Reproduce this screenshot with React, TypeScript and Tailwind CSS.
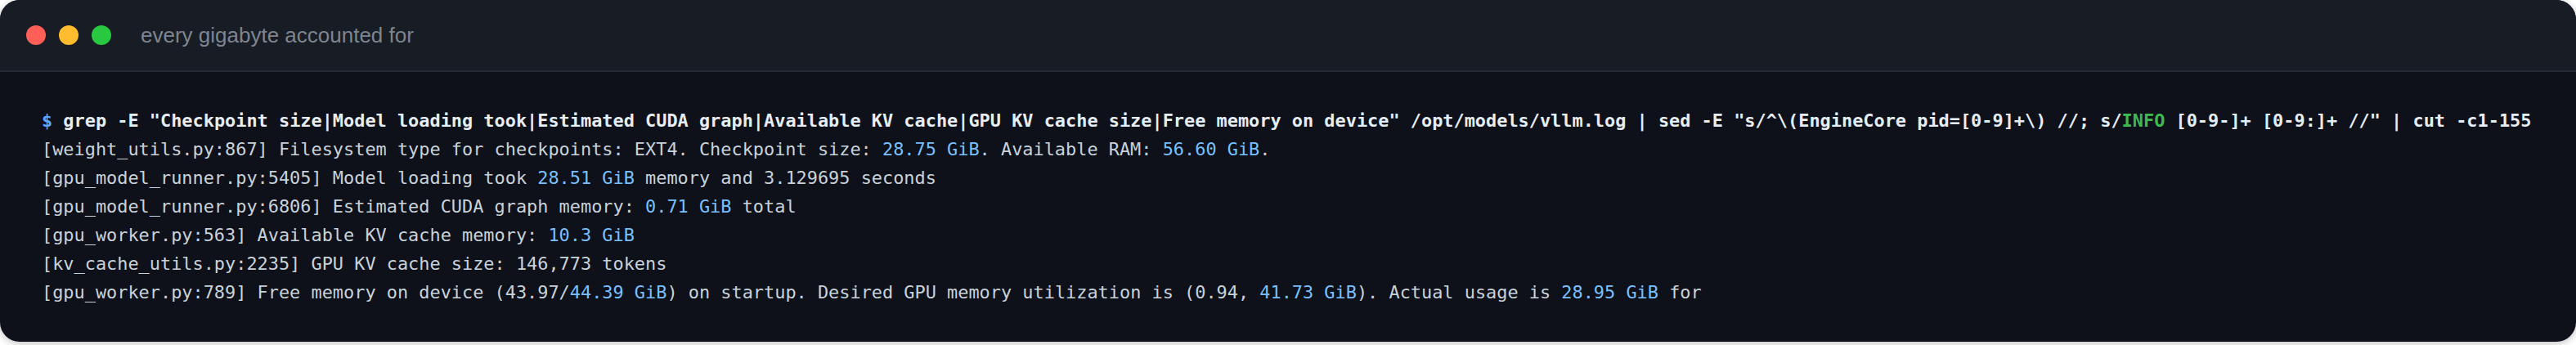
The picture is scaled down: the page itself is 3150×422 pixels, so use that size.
import React from 'react';

type Seg = { t: string; hl?: boolean };

const lines: Seg[][] = [
  [{ t: '[weight_utils.py:867] Filesystem type for checkpoints: EXT4. Checkpoint size: ' }, { t: '28.75 GiB', hl: true }, { t: '. Available RAM: ' }, { t: '56.60 GiB', hl: true }, { t: '.' }],
  [{ t: '[gpu_model_runner.py:5405] Model loading took ' }, { t: '28.51 GiB', hl: true }, { t: ' memory and 3.129695 seconds' }],
  [{ t: '[gpu_model_runner.py:6806] Estimated CUDA graph memory: ' }, { t: '0.71 GiB', hl: true }, { t: ' total' }],
  [{ t: '[gpu_worker.py:563] Available KV cache memory: ' }, { t: '10.3 GiB', hl: true }],
  [{ t: '[kv_cache_utils.py:2235] GPU KV cache size: 146,773 tokens' }],
  [
    { t: '[gpu_worker.py:789] Free memory on device (43.97/' },
    { t: '44.39 GiB', hl: true },
    { t: ') on startup. Desired GPU memory utilization is (0.94, ' },
    { t: '41.73 GiB', hl: true },
    { t: '). Actual usage is ' },
    { t: '28.95 GiB', hl: true },
    { t: ' for' },
  ],
];

export default function App() {
  return (
    <div className="w-[3150px] h-[422px] bg-white">
      <div className="h-[418px] rounded-[24px] overflow-hidden bg-[#0e111a] shadow-[0_2px_10px_rgba(0,0,0,0.25)] flex flex-col">
        {/* title bar */}
        <div className="h-[88px] shrink-0 bg-[#181c24] border-b-2 border-[#242933] flex items-center pl-[32px]">
          <div className="flex gap-[16px]">
            <span className="w-[24px] h-[24px] rounded-full bg-[#ff5f57]" />
            <span className="w-[24px] h-[24px] rounded-full bg-[#febc2e]" />
            <span className="w-[24px] h-[24px] rounded-full bg-[#28c840]" />
          </div>
          <span className="ml-[36px] text-[26px] text-[#7d8590] font-['Liberation_Sans',Arial,sans-serif]">
            every gigabyte accounted for
          </span>
        </div>

        {/* terminal body */}
        <div className="flex-1 pt-[42px] pl-[51px] font-['DejaVu_Sans_Mono',monospace] text-[21.9px] leading-[35px] whitespace-pre text-[#c9d1d9]">
          <div className="font-bold text-[#e6edf3]">
            <span className="text-[#58a6ff]">$</span>
            {' grep -E "Checkpoint size|Model loading took|Estimated CUDA graph|Available KV cache|GPU KV cache size|Free memory on device" /opt/models/vllm.log | sed -E "s/^\\(EngineCore pid=[0-9]+\\) //; s/'}
            <span className="text-[#3fb950]">INFO</span>
            {' [0-9-]+ [0-9:]+ //" | cut -c1-155'}
          </div>
          {lines.map((segs, i) => (
            <div key={i}>
              {segs.map((s, j) => (
                <span key={j} className={s.hl ? 'text-[#79c0ff]' : undefined}>
                  {s.t}
                </span>
              ))}
            </div>
          ))}
        </div>
      </div>
    </div>
  );
}
